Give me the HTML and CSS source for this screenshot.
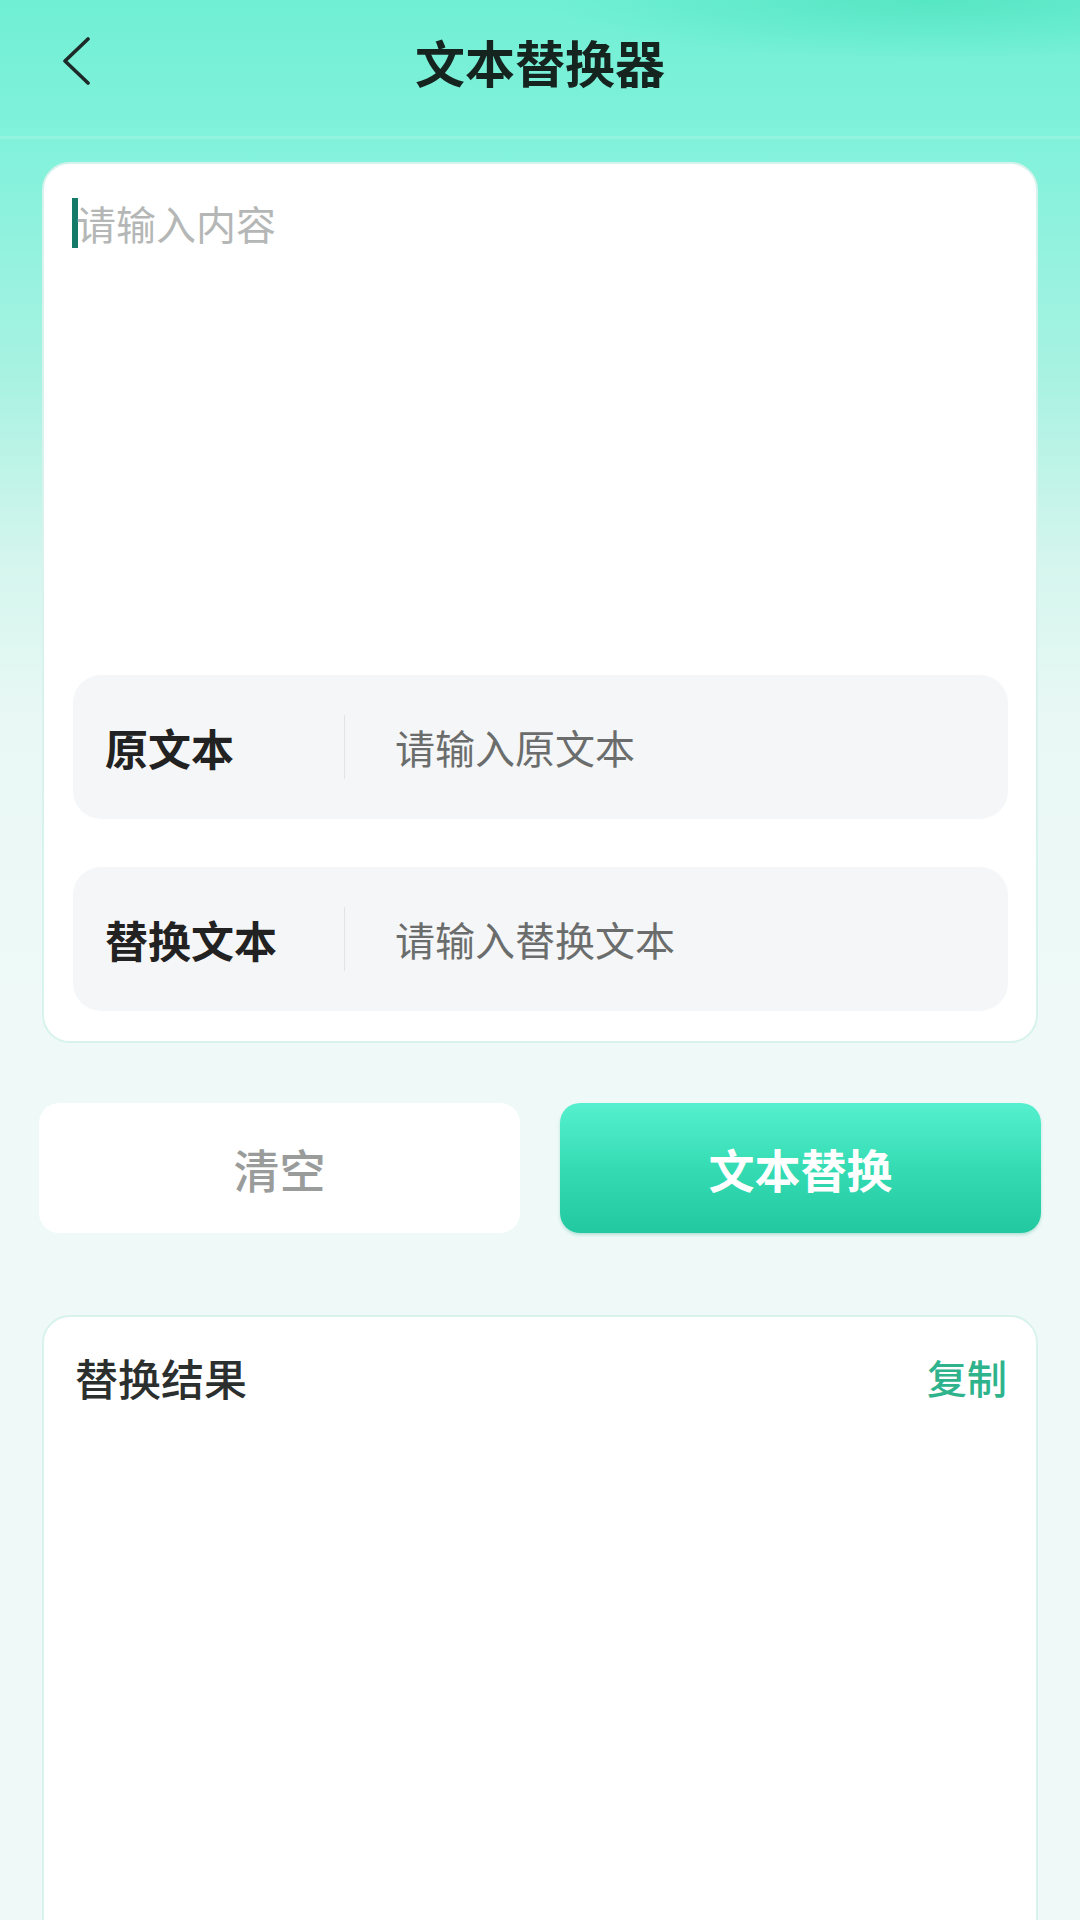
FILE: index.html
```html
<!DOCTYPE html>
<html lang="zh-CN">
<head>
  <meta charset="UTF-8" />
  <meta name="viewport" content="width=device-width, initial-scale=1.0"/>
  <title>文本替换器</title>
  <link rel="stylesheet" href="styles.css">
</head>
<body>
  <header class="topbar">
    <div class="back">
      <svg width="30" height="48" viewBox="0 0 30 48" fill="none">
        <polyline points="27,2 4,24 27,46" stroke="#1d2a27" stroke-width="3.6" stroke-linecap="round" stroke-linejoin="round"/>
      </svg>
    </div>
    <h1>文本替换器</h1>
    <div></div>
  </header>

  <main class="page">
    <section class="card input-card">
      <div class="editor">
        <span class="cursor"></span>
        <span class="placeholder">请输入内容</span>
      </div>

      <div class="field">
        <span class="field-label">原文本</span>
        <span class="field-sep"></span>
        <span class="field-input">请输入原文本</span>
      </div>

      <div class="field">
        <span class="field-label">替换文本</span>
        <span class="field-sep"></span>
        <span class="field-input">请输入替换文本</span>
      </div>
    </section>

    <div class="actions">
      <button class="btn btn-clear">清空</button>
      <button class="btn btn-main">文本替换</button>
    </div>

    <section class="card result-card">
      <div class="result-head">
        <span class="result-title">替换结果</span>
        <span class="copy">复制</span>
      </div>
    </section>
  </main>
</body>
</html>
```

FILE: styles.css
```css
* {
  box-sizing: border-box;
}

body {
  margin: 0;
  font-family: "Noto Sans CJK SC", "Noto Sans", sans-serif;
  color: #222;
  background:
    radial-gradient(ellipse 380px 60px at 930px 0, rgba(80, 228, 192, 0.8), rgba(80, 228, 192, 0) 100%),
    linear-gradient(180deg, rgba(255,255,255,0) 136px, rgba(255,255,255,0.14) 136px, rgba(255,255,255,0.14) 139px, rgba(255,255,255,0) 139px),
    linear-gradient(180deg, #70efd4 0, #84f2dc 160px, #a9f2e2 380px, #d4f5ed 560px, #e9f8f5 720px, #eef9f8 1000px);
  min-height: 1920px;
  overflow: hidden;
}

.topbar {
  display: grid;
  grid-template-columns: 1fr auto 1fr;
  align-items: center;
  height: 122px;
}

.back {
  padding-left: 61px;
  display: flex;
  align-items: center;
}

.topbar h1 {
  margin: 0;
  font-size: 50px;
  font-weight: 700;
  color: #16241f;
  line-height: 60px;
}

.page {
  padding: 40px 39px 0;
}

.card {
  background: #fff;
  border: 2px solid #d8f2ec;
  border-radius: 28px;
  margin: 0 3px;
}

.input-card {
  padding: 34px 28px 30px 29px;
}

.editor {
  display: flex;
  align-items: flex-start;
  height: 477px;
}

.cursor {
  width: 6px;
  height: 50px;
  background: #167a68;
  margin-left: -1px;
}

.placeholder {
  font-size: 40px;
  line-height: 50px;
  color: #b4b7b6;
  margin-left: -2px;
}

.field {
  display: flex;
  align-items: center;
  height: 144px;
  background: #f5f6f7;
  border-radius: 28px;
}

.field + .field {
  margin-top: 48px;
}

.field-label {
  width: 271px;
  padding-left: 32px;
  font-size: 43px;
  font-weight: 700;
  color: #222;
}

.field-sep {
  width: 1px;
  height: 64px;
  background: #e2e4e4;
}

.field-input {
  margin-left: 50px;
  font-size: 40px;
  color: #6b6d6d;
}

.actions {
  display: flex;
  gap: 40px;
  margin-top: 60px;
}

.btn {
  flex: 1;
  height: 130px;
  border: none;
  border-radius: 20px;
  font-family: inherit;
  font-size: 46px;
  cursor: pointer;
}

.btn-clear {
  background: #fff;
  color: #9a9c9c;
  font-weight: 500;
}

.btn-main {
  background: linear-gradient(180deg, #55f0cf 0%, #35dcb3 50%, #22c9a0 100%);
  color: #fff;
  font-weight: 700;
  box-shadow: 0 2px 3px rgba(20, 160, 120, 0.25);
}

.result-card {
  margin-top: 82px;
  height: 720px;
  padding: 28px 29px 0 31px;
}

.result-head {
  display: flex;
  justify-content: space-between;
  align-items: center;
  height: 64px;
}

.result-title {
  font-size: 43px;
  font-weight: 500;
  color: #2b2f2e;
}

.copy {
  font-size: 40px;
  font-weight: 500;
  color: #2fb38c;
}
```
